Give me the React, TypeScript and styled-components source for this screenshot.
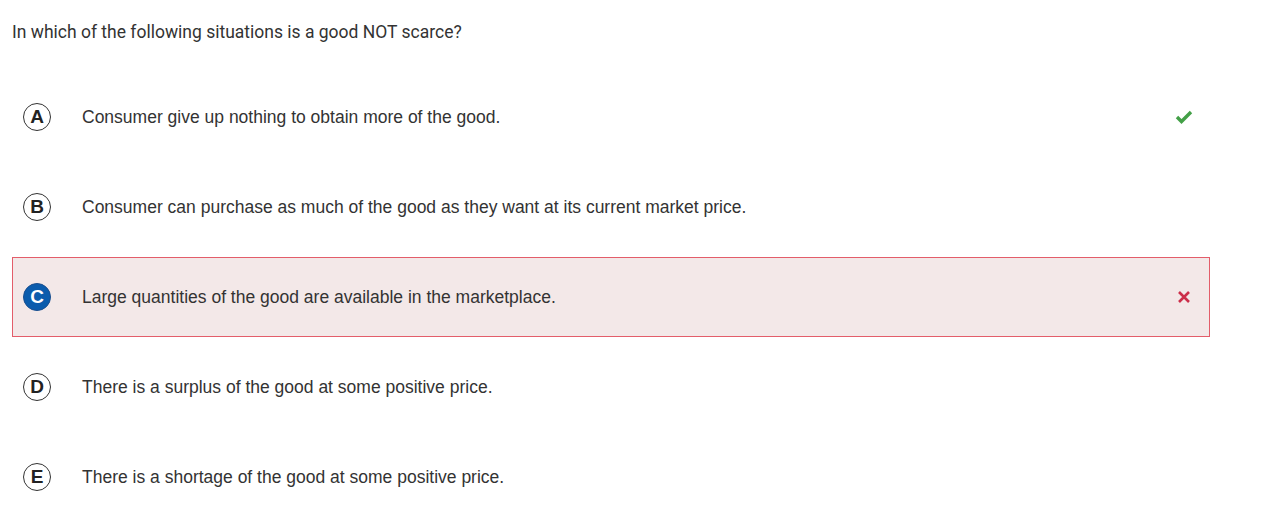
import React from "react";
import styled, { createGlobalStyle } from "styled-components";

const Global = createGlobalStyle`
  html, body { margin: 0; padding: 0; background: #ffffff; }
  body { font-family: "Liberation Sans", Arial, sans-serif; }
`;

const Page = styled.div`
  padding: 0 65px 0 12px;
  width: 1198px;
`;

const Question = styled.div`
  font-family: Roboto, "Liberation Sans", sans-serif;
  font-size: 17.5px;
  line-height: 22px;
  color: #333333;
  padding-top: 21px;
  height: 77px;
  box-sizing: border-box;
`;

const List = styled.div`
  display: flex;
  flex-direction: column;
  gap: 10px;
`;

const Row = styled.div<{ $wrong?: boolean }>`
  display: flex;
  align-items: center;
  height: 80px;
  box-sizing: border-box;
  border: 1px solid ${(p) => (p.$wrong ? "#e35d6a" : "transparent")};
  background: ${(p) => (p.$wrong ? "#f3e8e8" : "transparent")};
  padding: 0 16px 0 10px;
`;

const Badge = styled.div<{ $selected?: boolean }>`
  width: 28px;
  height: 28px;
  border-radius: 50%;
  box-sizing: border-box;
  border: 1.5px solid ${(p) => (p.$selected ? "#1a4f8f" : "#333333")};
  background: ${(p) => (p.$selected ? "#0b5cad" : "transparent")};
  color: ${(p) => (p.$selected ? "#ffffff" : "#222222")};
  display: flex;
  align-items: center;
  justify-content: center;
  font-family: "Liberation Sans", Arial, sans-serif;
  font-weight: 700;
  font-size: 19px;
`;

const Text = styled.div`
  flex: 1;
  margin-left: 31px;
  font-family: "Liberation Sans", Arial, sans-serif;
  font-size: 17.5px;
  color: #333333;
`;

const Mark = styled.div`
  width: 18px;
  height: 18px;
  display: flex;
  align-items: center;
  justify-content: center;
`;

const Check = () => (
  <svg width="18" height="16" viewBox="0 0 18 16">
    <path d="M2 8 L6.5 12.5 L16 3" fill="none" stroke="#43a047" strokeWidth="3.4" strokeLinecap="butt" />
  </svg>
);

const Cross = () => (
  <svg width="14" height="14" viewBox="0 0 14 14">
    <path d="M2 2 L12 12 M12 2 L2 12" stroke="#cc2e4a" strokeWidth="2.6" />
  </svg>
);

const options = [
  { l: "A", t: "Consumer give up nothing to obtain more of the good.", mark: "check" },
  { l: "B", t: "Consumer can purchase as much of the good as they want at its current market price." },
  { l: "C", t: "Large quantities of the good are available in the marketplace.", mark: "cross", wrong: true },
  { l: "D", t: "There is a surplus of the good at some positive price." },
  { l: "E", t: "There is a shortage of the good at some positive price." },
];

export default function App() {
  return (
    <Page>
      <Global />
      <Question>In which of the following situations is a good NOT scarce?</Question>
      <List>
        {options.map((o) => (
          <Row key={o.l} $wrong={o.wrong}>
            <Badge $selected={o.wrong}>{o.l}</Badge>
            <Text>{o.t}</Text>
            <Mark>{o.mark === "check" ? <Check /> : o.mark === "cross" ? <Cross /> : null}</Mark>
          </Row>
        ))}
      </List>
    </Page>
  );
}
